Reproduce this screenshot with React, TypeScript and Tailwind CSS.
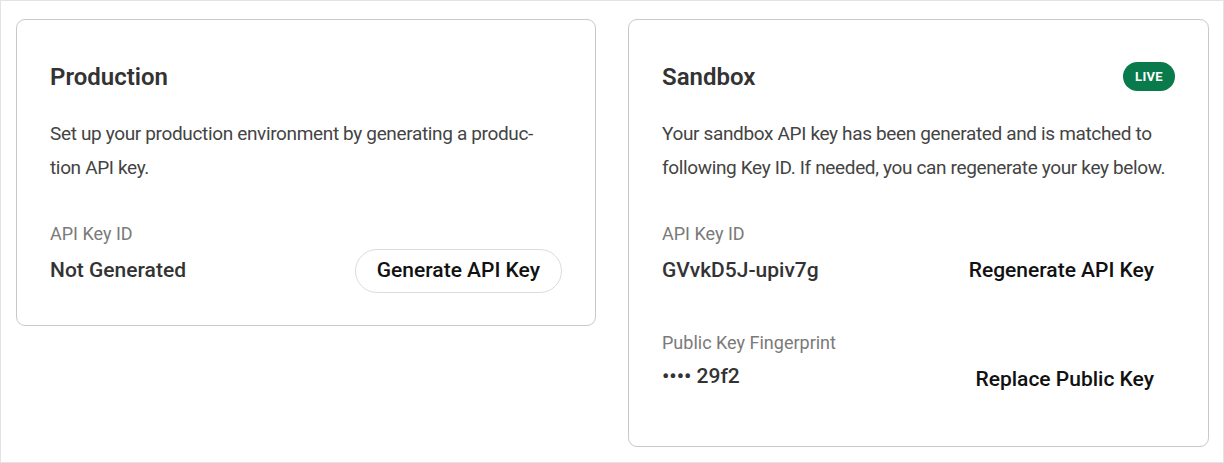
import React from 'react';

const font = { fontFamily: 'Roboto, "Noto Sans", sans-serif' };

function Field({
  label,
  value,
  action,
  bordered,
  shift,
}: {
  label: string;
  value: string;
  action: string;
  bordered?: boolean;
  shift?: boolean;
}) {
  return (
    <div>
      <div className="h-[26px] leading-[26px] text-[18px] text-[#7a7a7a]">{label}</div>
      <div className="mt-[2px] flex h-[44px] items-center justify-between">
        <span className={'text-[21px] font-medium text-[#333] ' + (shift ? '-mt-[6px]' : '')}>{value}</span>
        <button
          className={
            'h-[44px] rounded-full px-[21px] text-[21px] font-medium text-[#111] ' +
            (bordered ? 'border border-[#dcdcdc] bg-white' : 'bg-transparent')
          }
        >
          {action}
        </button>
      </div>
    </div>
  );
}

export default function App() {
  return (
    <div
      style={font}
      className="h-[463px] w-[1224px] border border-[#e3e3e3] bg-white pl-[15px] pt-[18px]"
    >
      <div className="grid grid-cols-[580px_581px] items-start gap-[32px]">
        {/* Production */}
        <div className="rounded-[9px] border border-[#c9c9c9] px-[33px] pt-[42px] pb-[32px]">
          <div className="flex h-[29px] items-center">
            <h2 className="text-[24px] font-semibold text-[#333]">Production</h2>
          </div>
          <p className="mt-[26px] text-[19px] tracking-[-0.35px] leading-[34px] text-[#444] whitespace-nowrap">
            Set up your production environment by generating a produc-
            <br />
            tion API key.
          </p>
          <div className="mt-[36px]">
            <Field label="API Key ID" value="Not Generated" action="Generate API Key" bordered />
          </div>
        </div>

        {/* Sandbox */}
        <div className="rounded-[9px] border border-[#c9c9c9] px-[33px] pt-[42px] pb-[44px]">
          <div className="flex h-[29px] items-center justify-between">
            <h2 className="text-[24px] font-semibold text-[#333]">Sandbox</h2>
            <span className="flex h-[29px] items-center rounded-full bg-[#087a4b] px-[12px] text-[13px] font-bold tracking-wide text-white">
              LIVE
            </span>
          </div>
          <p className="mt-[26px] text-[19px] tracking-[-0.35px] leading-[34px] text-[#444] whitespace-nowrap">
            Your sandbox API key has been generated and is matched to
            <br />
            following Key ID. If needed, you can regenerate your key below.
          </p>
          <div className="mt-[36px]">
            <Field label="API Key ID" value="GVvkD5J-upiv7g" action="Regenerate API Key" />
          </div>
          <div className="mt-[37px]">
            <Field label="Public Key Fingerprint" value="•••• 29f2" action="Replace Public Key" shift />
          </div>
        </div>
      </div>
    </div>
  );
}
